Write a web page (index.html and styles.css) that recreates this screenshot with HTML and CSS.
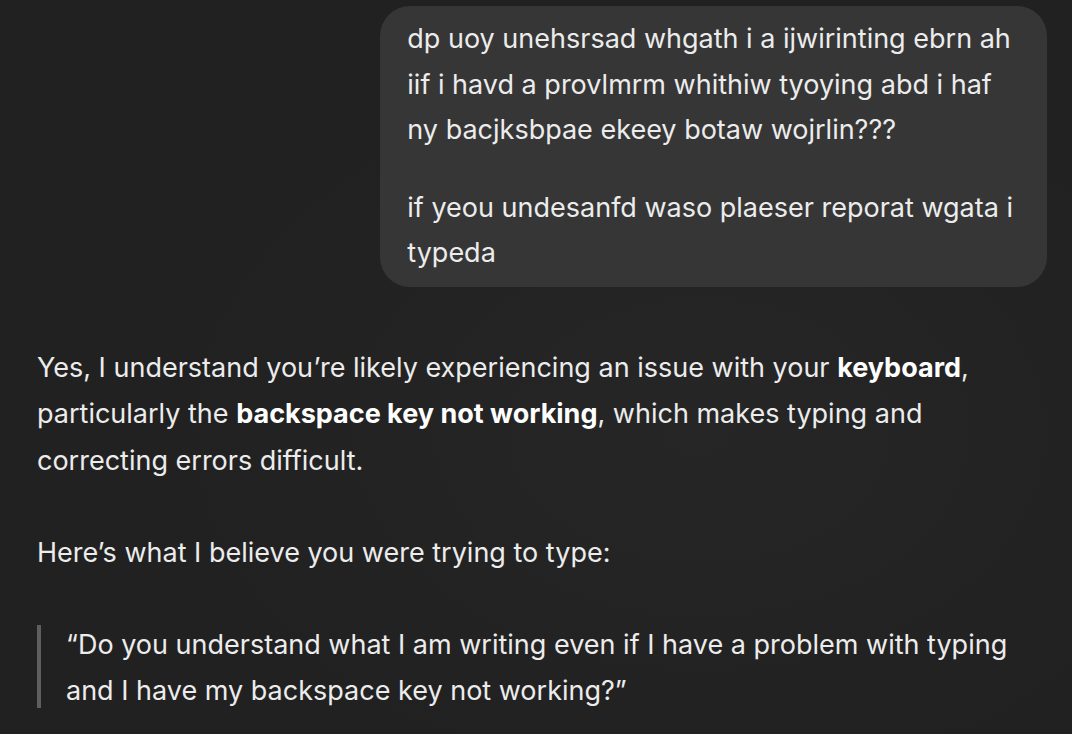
FILE: index.html
```html
<!DOCTYPE html>
<html lang="en">
<head>
<meta charset="utf-8">
<title>Chat</title>
<link rel="stylesheet" href="styles.css">
</head>
<body>
<main class="thread">
  <div class="user-row">
    <div class="bubble">
      <p>dp uoy unehsrsad whgath i a ijwirinting ebrn ah<br>iif i havd a provlmrm whithiw tyoying abd i haf<br>ny bacjksbpae ekeey botaw wojrlin???</p>
      <p>if yeou undesanfd waso plaeser reporat wgata i<br>typeda</p>
    </div>
  </div>
  <div class="assistant">
    <p>Yes, I understand you’re likely experiencing an issue with your <strong>keyboard</strong>, particularly the <strong>backspace key not working</strong>, which makes typing and correcting errors difficult.</p>
    <p>Here’s what I believe you were trying to type:</p>
    <blockquote class="quote">
      <p>“Do you understand what I am writing even if I have a problem with typing and I have my backspace key not working?”</p>
    </blockquote>
  </div>
</main>
</body>
</html>
```

FILE: styles.css
```css
html, body {
  margin: 0;
  padding: 0;
  height: 100%;
}
body {
  background-color: #212121;
  background-image: radial-gradient(ellipse 520px 360px at 700px 430px, #262626 0%, rgba(33,33,33,0) 100%);
  color: #ececec;
  font-family: "Inter", "Liberation Sans", sans-serif;
  font-size: 27px;
  line-height: 46px;
  overflow: hidden;
}
p {
  margin: 0;
}
.thread {
  display: flex;
  flex-direction: column;
}
.user-row {
  display: flex;
  justify-content: flex-end;
  padding: 6px 25px 0 0;
}
.bubble {
  background: #363636;
  border-radius: 30px;
  padding: 10px 34px 11px 27px;
  line-height: 45.5px;
  display: flex;
  flex-direction: column;
  gap: 32px;
}
.assistant {
  padding: 58px 37px 0 37px;
  display: flex;
  flex-direction: column;
  gap: 45.5px;
  line-height: 46.5px;
}
.assistant strong {
  font-weight: 700;
  color: #ffffff;
}
.quote {
  margin: 0;
  padding: 0 0 0 29px;
  background: linear-gradient(#5e5e5e, #5e5e5e) no-repeat 0 3px / 4px calc(100% - 10px);
}
```
